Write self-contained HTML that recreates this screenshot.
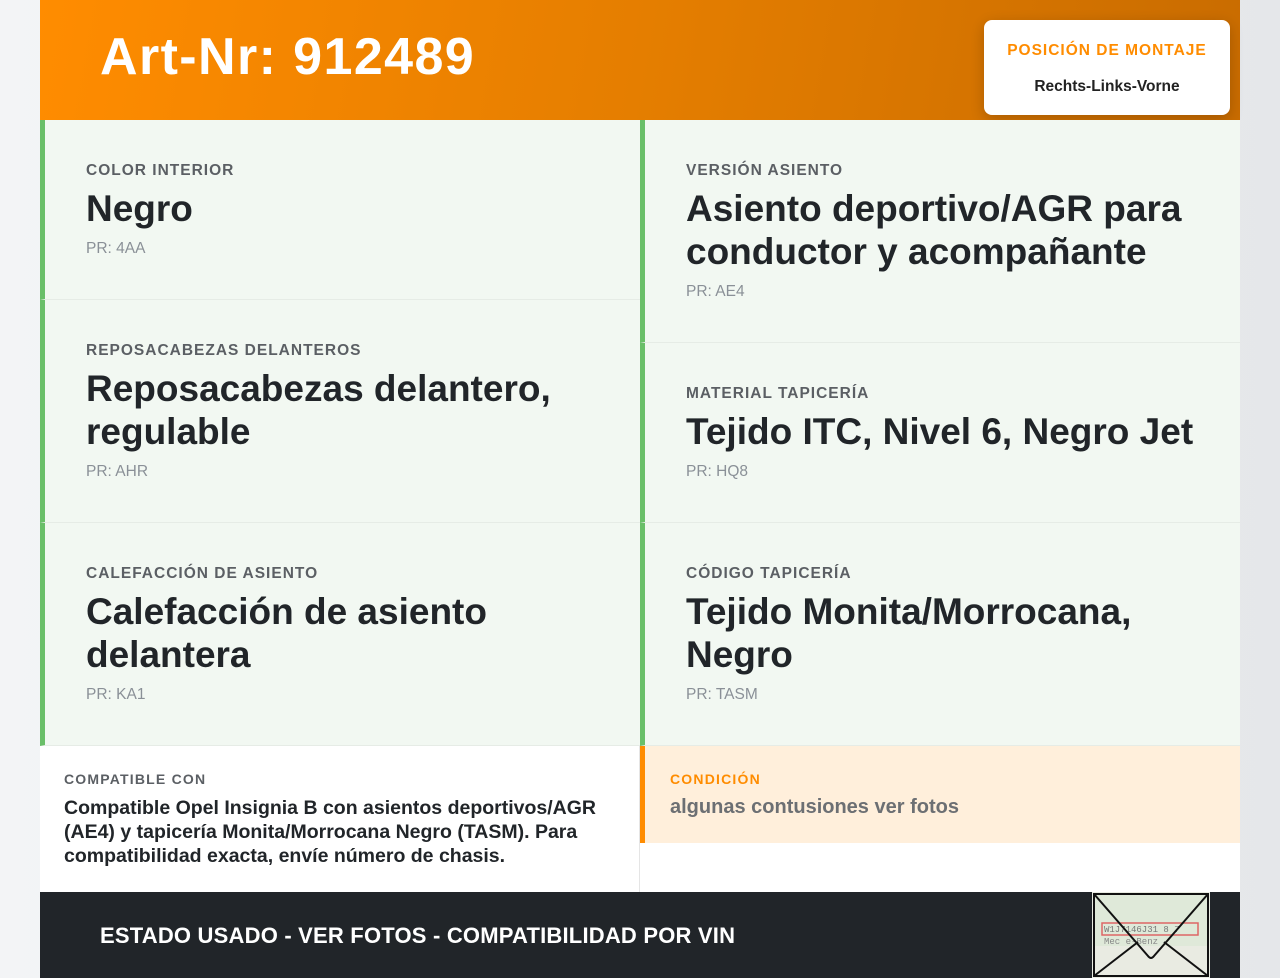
<!DOCTYPE html>
<html><head><meta charset="utf-8"><style>
*{box-sizing:border-box;margin:0;padding:0}
body{width:1280px;height:978px;overflow:hidden;background:linear-gradient(90deg,#f3f4f6,#e5e7ea);font-family:"Liberation Sans",sans-serif;color:#212529}
.wrap{position:absolute;left:40px;top:0;width:1200px;height:978px;background:#fff}
.hdr{height:120px;background:linear-gradient(100deg,#ff8c00 0%,#e57e00 50%,#c96c00 100%);position:relative}
.hdr h1{position:absolute;left:60px;top:27px;font-size:52px;font-weight:bold;color:#fff;letter-spacing:1.4px}
.badge{position:absolute;left:944px;top:20px;width:246px;height:95px;background:#fff;border-radius:8px;box-shadow:0 4px 14px rgba(0,0,0,.2);text-align:center}
.badge .l{color:#ff8c00;font-weight:bold;font-size:15.5px;letter-spacing:1px;margin-top:22px}
.badge .v{font-size:15.5px;font-weight:bold;margin-top:18px;color:#222}
.col{position:absolute;top:120px;width:600px}
.cell{position:relative;background:#f2f8f2;border-left:5px solid #6abf69;border-bottom:1px solid #e6ece6;padding-left:41px;padding-right:40px}
.lab{font-size:15.5px;letter-spacing:1px;color:#5b5f64;font-weight:bold;padding-top:42px}
.val{font-size:37px;font-weight:bold;line-height:43px;margin-top:7px;color:#212529}
.pr{font-size:15.5px;color:#8a9097;margin-top:10px}
.bl{position:absolute;left:0;top:746px;width:600px;height:146px;border-right:1px solid #e5e5e5;padding:25px 24px}
.bl .lab2{font-size:14px;letter-spacing:1.2px;color:#5b5f64;font-weight:bold}
.bl p{font-size:19.5px;font-weight:bold;line-height:24px;margin-top:9px;color:#212529}
.br{position:absolute;left:600px;top:746px;width:600px;height:97px;background:#ffefdb;border-left:5px solid #ff8c00;padding:25px 25px}
.br .lab2{font-size:14px;letter-spacing:1.2px;color:#ff8c00;font-weight:bold}
.br p{font-size:20px;font-weight:bold;color:#6c6f73;margin-top:9px}
.ftr{position:absolute;left:0;top:892px;width:1200px;height:86px;background:#212529}
.ftr span{position:absolute;left:60px;top:31px;color:#fff;font-weight:bold;font-size:22px;letter-spacing:.2px}
</style></head><body>
<div class="wrap">
<div class="hdr"><h1>Art-Nr: 912489</h1>
<div class="badge"><div class="l">POSICIÓN DE MONTAJE</div><div class="v">Rechts-Links-Vorne</div></div></div>
<div class="col" style="left:0">
<div class="cell" style="height:180px"><div class="lab">COLOR INTERIOR</div><div class="val">Negro</div><div class="pr">PR: 4AA</div></div>
<div class="cell" style="height:223px"><div class="lab">REPOSACABEZAS DELANTEROS</div><div class="val">Reposacabezas delantero, regulable</div><div class="pr">PR: AHR</div></div>
<div class="cell" style="height:223px"><div class="lab">CALEFACCIÓN DE ASIENTO</div><div class="val">Calefacción de asiento delantera</div><div class="pr">PR: KA1</div></div>
</div>
<div class="col" style="left:600px">
<div class="cell" style="height:223px"><div class="lab">VERSIÓN ASIENTO</div><div class="val">Asiento deportivo/AGR para conductor y acompañante</div><div class="pr">PR: AE4</div></div>
<div class="cell" style="height:180px"><div class="lab">MATERIAL TAPICERÍA</div><div class="val">Tejido ITC, Nivel 6, Negro Jet</div><div class="pr">PR: HQ8</div></div>
<div class="cell" style="height:223px"><div class="lab">CÓDIGO TAPICERÍA</div><div class="val">Tejido Monita/Morrocana, Negro</div><div class="pr">PR: TASM</div></div>
</div>
<div class="bl"><div class="lab2">COMPATIBLE CON</div><p>Compatible Opel Insignia B con asientos deportivos/AGR (AE4) y tapicería Monita/Morrocana Negro (TASM). Para compatibilidad exacta, envíe número de chasis.</p></div>
<div class="br"><div class="lab2">CONDICIÓN</div><p>algunas contusiones ver fotos</p></div>
<div class="ftr"><span>ESTADO USADO - VER FOTOS - COMPATIBILIDAD POR VIN</span>
<svg style="position:absolute;left:1052px;top:0" width="118" height="86" viewBox="0 0 118 86">
<rect x="0" y="0" width="118" height="86" fill="#e9ebe2"/>
<rect x="2" y="2" width="114" height="52" fill="#dfe9d9"/>
<rect x="10" y="31" width="96" height="12" fill="none" stroke="#d66" stroke-width="1.5"/>
<text x="12" y="40" font-size="9" font-family="Liberation Mono" fill="#777">W1J7146J31  8 7</text>
<text x="12" y="52" font-size="9" font-family="Liberation Mono" fill="#888">Mec  e-Benz</text>
<rect x="2" y="2" width="114" height="82" fill="none" stroke="#111" stroke-width="2"/>
<path d="M2 2 L56 64 Q59 68 62 64 L116 2 M2 84 L46 50 M116 84 L72 50" stroke="#111" stroke-width="2" fill="none"/>
</svg></div>
</div>
</body></html>
